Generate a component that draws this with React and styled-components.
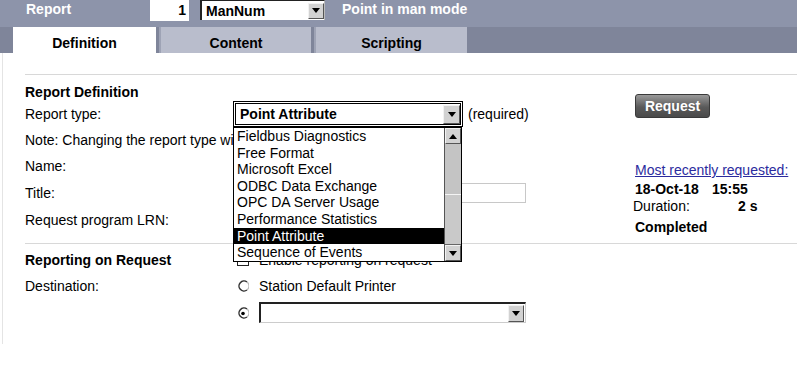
import React from "react";
import styled, { createGlobalStyle, css } from "styled-components";

const GlobalStyle = createGlobalStyle`
  body {
    margin: 0;
    background: #fff;
    font-family: "Liberation Sans", Arial, sans-serif;
    font-size: 14px;
    color: #000;
  }
`;

const Page = styled.div`
  width: 797px;
`;

const TopBar = styled.div`
  display: flex;
  align-items: flex-start;
  height: 27px;
  background: #8d94aa;
`;

const BarLabel = styled.div`
  color: #fff;
  font-weight: bold;
  line-height: 19px;
  padding-left: ${(p) => p.$indent || 0}px;
  width: ${(p) => (p.$width ? p.$width + "px" : "auto")};
  box-sizing: border-box;
`;

const NumBox = styled.div`
  width: 39px;
  height: 21px;
  background: #fff;
  font-weight: bold;
  text-align: right;
  padding-right: 3px;
  line-height: 21px;
  box-sizing: border-box;
`;

const MiniSelect = styled.div`
  display: flex;
  align-items: center;
  justify-content: space-between;
  margin: 0 17px 0 11px;
  width: 125px;
  height: 20px;
  background: #fff;
  border-left: 2px solid #222;
  border-top: 1px solid #222;
  border-right: 1px solid #bbb;
  box-sizing: border-box;
  padding-left: 4px;
  font-weight: bold;
`;

const ArrowBtn = styled.div`
  display: flex;
  align-items: center;
  justify-content: center;
  width: ${(p) => p.$w || 16}px;
  height: ${(p) => p.$h || 16}px;
  background: #d2d2d2;
  border-top: 1px solid #f2f2f2;
  border-left: 1px solid #f2f2f2;
  border-right: 1px solid #555;
  border-bottom: 1px solid #555;
  box-sizing: border-box;
  flex-shrink: 0;
`;

const TabBar = styled.div`
  display: flex;
  gap: 3px;
  height: 26px;
  padding-left: 13px;
  background: #7f859a;
`;

const Tab = styled.div`
  width: ${(p) => p.$width}px;
  display: flex;
  align-items: center;
  justify-content: center;
  padding-top: 5px;
  font-weight: bold;
  box-sizing: border-box;
  ${(p) =>
    p.$active
      ? css`
          background: #fff;
        `
      : css`
          background: #b9bdcc;
          border-left: 2px solid #9ea3b5;
        `}
`;

const Body = styled.div`
  margin-left: 2px;
  border-left: 1px solid #e4e4e4;
  height: 291px;
  padding: 21px 0 0 22px;
  box-sizing: border-box;
`;

const Rule = styled.div`
  width: 772px;
  height: 1px;
  background: #d8d8d8;
  margin-top: ${(p) => p.$top || 0}px;
`;

const Section = styled.div`
  display: flex;
  align-items: flex-start;
  padding-top: ${(p) => p.$pad}px;
  height: ${(p) => (p.$h ? p.$h + "px" : "auto")};
  box-sizing: border-box;
`;

const Form = styled.div`
  width: 610px;
  display: flex;
  flex-direction: column;
`;

const Row = styled.div`
  display: flex;
  align-items: center;
  height: ${(p) => p.$h}px;
  white-space: nowrap;
`;

const Label = styled.div`
  width: 208px;
  flex-shrink: 0;
  font-weight: ${(p) => (p.$bold ? "bold" : "normal")};
  overflow: ${(p) => (p.$clip ? "hidden" : "visible")};
`;

const Field = styled.div`
  display: flex;
  align-items: center;
  gap: ${(p) => p.$gap || 0}px;
  padding-left: ${(p) => p.$indent || 0}px;
  position: relative;
`;

const SelectWrap = styled.div`
  position: relative;
  z-index: 2;
`;

const SelectBox = styled.div`
  display: flex;
  align-items: center;
  justify-content: space-between;
  width: 230px;
  height: 26px;
  border: 3px double #000;
  box-sizing: border-box;
  background: #fff;
  padding-left: 4px;
  font-weight: bold;
`;

const DropList = styled.div`
  position: absolute;
  top: 100%;
  left: 0;
  width: 229px;
  height: 135px;
  display: flex;
  background: #fff;
  border: 1px solid #000;
  box-sizing: border-box;
  font-weight: normal;
`;

const Options = styled.div`
  flex: 1;
  display: flex;
  flex-direction: column;
`;

const Option = styled.div`
  height: 16.6px;
  line-height: 16.6px;
  padding-left: 3px;
  ${(p) =>
    p.$selected &&
    css`
      background: #000;
      color: #fff;
    `}
`;

const ScrollBar = styled.div`
  width: 17px;
  display: flex;
  flex-direction: column;
  background: #c2c2c2;
  border-left: 1px solid #555;
  box-sizing: border-box;
`;

const Track = styled.div`
  flex: ${(p) => p.$grow};
  background: #c4c4c4;
  ${(p) =>
    p.$thumb &&
    css`
      background: #c9c9c9;
      border-top: 1px solid #f4f4f4;
      border-bottom: 1px solid #666;
    `}
`;

const Hint = styled.span`
  margin-left: 5px;
`;

const TextInput = styled.div`
  width: ${(p) => p.$w}px;
  height: 20px;
  border: 1px solid #c8c8c8;
  box-sizing: border-box;
  background: #fff;
`;

const WideSelect = styled.div`
  display: flex;
  align-items: center;
  justify-content: flex-end;
  width: 267px;
  height: 21px;
  border-left: 2px solid #222;
  border-top: 2px solid #222;
  border-right: 1px solid #ccc;
  border-bottom: 1px solid #ccc;
  box-sizing: border-box;
  padding-right: 1px;
`;

const CheckBox = styled.div`
  width: 12px;
  height: 12px;
  border: 1px solid #222;
  box-sizing: border-box;
`;

const Side = styled.div`
  display: flex;
  flex-direction: column;
  padding-top: 12px;
`;

const RequestButton = styled.button`
  width: 75px;
  height: 24px;
  border: 1px solid #3a3a3a;
  border-radius: 3px;
  background: linear-gradient(#9a9a9a, #5a5a5a 55%, #4a4a4a);
  color: #fff;
  font-family: inherit;
  font-size: 14px;
  font-weight: bold;
  padding: 0;
`;

const RecentLink = styled.a`
  margin-top: 44px;
  color: #2b2b9e;
  text-decoration: underline;
  line-height: 17px;
`;

const InfoRow = styled.div`
  display: flex;
  line-height: 17px;
  margin-top: ${(p) => p.$top || 0}px;
  margin-left: ${(p) => p.$shift || 0}px;
  font-weight: ${(p) => (p.$bold ? "bold" : "normal")};
`;

const Cell = styled.span`
  width: ${(p) => p.$w}px;
  font-weight: ${(p) => (p.$bold ? "bold" : "inherit")};
`;

function Arrow({ up }) {
  return (
    <svg width="8" height="5" viewBox="0 0 8 5">
      <path d={up ? "M0 5 L4 0 L8 5 Z" : "M0 0 L8 0 L4 5 Z"} fill="#000" />
    </svg>
  );
}

function Radio({ checked }) {
  return (
    <svg width="12" height="12" viewBox="0 0 12 12">
      <path d="M10 2 A5 5 0 1 0 10 10" fill="none" stroke="#333" strokeWidth="1.5" />
      <path d="M10 2 A5 5 0 0 1 10 10" fill="none" stroke="#bbb" strokeWidth="1.2" />
      {checked && <circle cx="6" cy="6.5" r="1.8" fill="#000" />}
    </svg>
  );
}

const reportTypes = [
  "Fieldbus Diagnostics",
  "Free Format",
  "Microsoft Excel",
  "ODBC Data Exchange",
  "OPC DA Server Usage",
  "Performance Statistics",
  "Point Attribute",
  "Sequence of Events",
];

export default function App() {
  return (
    <Page>
      <GlobalStyle />
      <TopBar>
        <BarLabel $indent={26} $width={150}>Report</BarLabel>
        <NumBox>1</NumBox>
        <MiniSelect>
          ManNum
          <ArrowBtn $w={16} $h={16}>
            <Arrow />
          </ArrowBtn>
        </MiniSelect>
        <BarLabel>Point in man mode</BarLabel>
      </TopBar>
      <TabBar>
        <Tab $active $width={143}>Definition</Tab>
        <Tab $width={152}>Content</Tab>
        <Tab $width={153}>Scripting</Tab>
      </TabBar>

      <Body>
        <Rule />
        <Section $pad={7} $h={158}>
          <Form>
            <Row $h={19}>
              <Label $bold>Report Definition</Label>
            </Row>
            <Row $h={26}>
              <Label>Report type:</Label>
              <Field>
                <SelectWrap>
                  <SelectBox>
                    Point Attribute
                    <ArrowBtn $w={17} $h={19}>
                      <Arrow />
                    </ArrowBtn>
                  </SelectBox>
                  <DropList>
                    <Options>
                      {reportTypes.map((t) => (
                        <Option key={t} $selected={t === "Point Attribute"}>
                          {t}
                        </Option>
                      ))}
                    </Options>
                    <ScrollBar>
                      <ArrowBtn $w={16} $h={16}>
                        <Arrow up />
                      </ArrowBtn>
                      <Track $grow={3} />
                      <Track $grow={3} $thumb />
                      <ArrowBtn $w={16} $h={16}>
                        <Arrow />
                      </ArrowBtn>
                    </ScrollBar>
                  </DropList>
                </SelectWrap>
                <Hint>(required)</Hint>
              </Field>
            </Row>
            <Row $h={26}>
              <Label $clip>Note: Changing the report type will reset content.</Label>
            </Row>
            <Row $h={26}>
              <Label>Name:</Label>
              <Field>
                <TextInput $w={200} />
              </Field>
            </Row>
            <Row $h={27}>
              <Label>Title:</Label>
              <Field>
                <TextInput $w={293} />
              </Field>
            </Row>
            <Row $h={27}>
              <Label>Request program LRN:</Label>
              <Field>
                <TextInput $w={120} />
              </Field>
            </Row>
          </Form>
          <Side>
            <RequestButton>Request</RequestButton>
            <RecentLink href="#">Most recently requested:</RecentLink>
            <InfoRow $top={2} $bold>
              <Cell $w={77}>18-Oct-18</Cell>
              <Cell>15:55</Cell>
            </InfoRow>
            <InfoRow $shift={-2}>
              <Cell $w={105}>Duration:</Cell>
              <Cell $bold>2 s</Cell>
            </InfoRow>
            <InfoRow $top={4} $bold>
              Completed
            </InfoRow>
          </Side>
        </Section>

        <Rule $top={10} />
        <Section $pad={4}>
          <Form>
            <Row $h={24}>
              <Label $bold>Reporting on Request</Label>
              <Field $indent={4} $gap={10}>
                <CheckBox />
                Enable reporting on request
              </Field>
            </Row>
            <Row $h={28}>
              <Label>Destination:</Label>
              <Field $indent={4} $gap={10}>
                <Radio />
                Station Default Printer
              </Field>
            </Row>
            <Row $h={25}>
              <Label />
              <Field $indent={4} $gap={10}>
                <Radio checked />
                <WideSelect>
                  <ArrowBtn $w={16} $h={17}>
                    <Arrow />
                  </ArrowBtn>
                </WideSelect>
              </Field>
            </Row>
          </Form>
        </Section>
      </Body>
    </Page>
  );
}
